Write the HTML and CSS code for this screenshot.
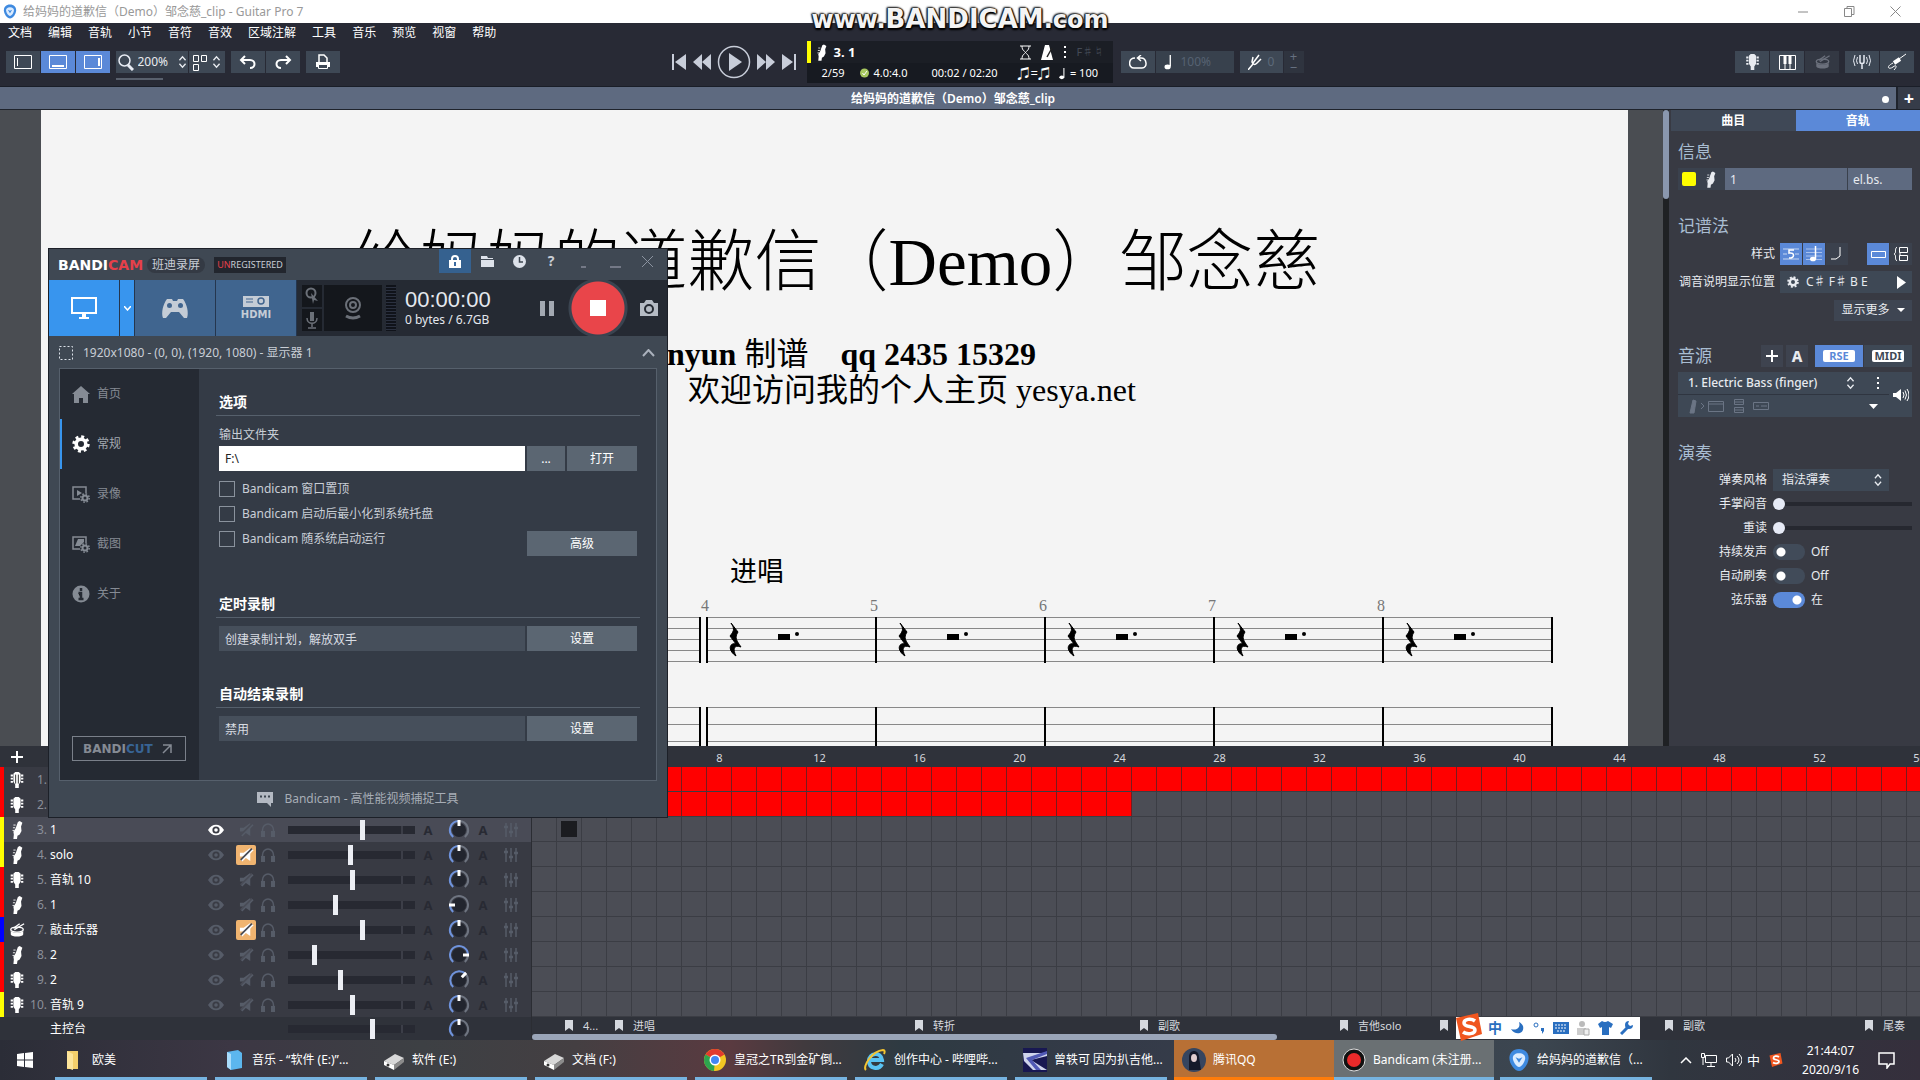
FILE: index.html
```html
<!DOCTYPE html>
<html lang="zh-CN">
<head>
<meta charset="utf-8">
<title>给妈妈的道歉信（Demo）邹念慈_clip - Guitar Pro 7</title>
<link rel="stylesheet" href="styles.css">
</head>
<body>
<svg class="sprite" aria-hidden="true">
  <symbol id="i-gp" viewBox="0 0 16 16"><path d="M8 0C3.500 0 1 3 1 6.500 1 11 5 16 8 16s7-5 7-9.500C15 3 12.500 0 8 0z" fill="#3f8ae0"/><path d="M8 3C5 3 3.500 4.500 3.500 6.500 3.500 9 6 13 8 13s4.500-4 4.500-6.500C12.500 4.500 11 3 8 3z" fill="#dcecff"/><path d="M5.500 6L8 10l2.500-4L8 7z" fill="#3f8ae0"/></symbol>
  <symbol id="i-bass" viewBox="0 0 16 20"><path d="M9 1l2-1 3 2-1.500 4 .5 5-2 4-2.500 1.500L8 20H4l.5-5L4 12l2.500-4z" fill="currentColor"/><path d="M4 4.500h2.500M3.500 7.500H6M3 10.500h2" stroke="currentColor"/></symbol>
  <symbol id="i-head" viewBox="0 0 16 20"><path d="M4 3l2-2h4l2 2v9l-2 3v4H6v-4l-2-3z" fill="currentColor"/><path d="M1 5h14M1 8.500h14M1 12h14" stroke="currentColor" stroke-width="2" stroke-dasharray="2.500 9"/></symbol>
  <symbol id="i-head2" viewBox="0 0 16 20"><path d="M4 3l2-2h4l2 2v9l-2 3v4H6v-4l-2-3z" fill="currentColor"/><path d="M1 5h14M1 8.500h14M1 12h14" stroke="currentColor" stroke-width="2" stroke-dasharray="2.500 9"/><path d="M6.500 4v10M9.500 4v10" stroke="#222"/></symbol>
  <symbol id="i-drum" viewBox="0 0 18 18"><path d="M2 10v4c1 3 13 3 14 0v-4c-2 2.500-12 2.500-14 0z" fill="currentColor"/><ellipse cx="9" cy="8.500" rx="7" ry="2.800" fill="none" stroke="currentColor" stroke-width="1.500"/><path d="M6 8.500L17 2M5 7l7-5" stroke="currentColor" stroke-width="1.500"/></symbol>
  <symbol id="i-eye" viewBox="0 0 16 12"><path d="M0 6c4-7 12-7 16 0-4 7-12 7-16 0z" fill="currentColor"/><circle cx="8" cy="6" r="3.600" fill="#3a3c45"/><circle cx="8" cy="6" r="1.800" fill="currentColor"/></symbol>
  <symbol id="i-mute" viewBox="0 0 16 16"><path d="M1 6h4l7-5v14l-7-5H1z" fill="currentColor"/><path d="M2 14L14 2" stroke="#4a4d57" stroke-width="2.500"/><path d="M3 15L15 3" stroke="currentColor" stroke-width="1.500"/></symbol>
  <symbol id="i-phones" viewBox="0 0 16 16"><path d="M2.500 12V8a5.500 6 0 0 1 11 0v4" fill="none" stroke="currentColor" stroke-width="1.500"/><path d="M1 9h4v6H1zM11 9h4v6h-4z" fill="currentColor"/></symbol>
  <symbol id="i-eq" viewBox="0 0 16 16"><path d="M3 1v14M8 1v14M13 1v14" stroke="currentColor" stroke-width="1.500"/><path d="M1 5h4M6 10h4M11 6h4" stroke="currentColor" stroke-width="2.500"/></symbol>
  <symbol id="i-updown" viewBox="0 0 10 16"><path d="M1.500 6L5 2l3.500 4M1.500 10L5 14l3.500-4" fill="none" stroke="currentColor" stroke-width="1.500"/></symbol>
  <symbol id="i-flag" viewBox="0 0 8 11"><path d="M0 0h8v11L4 8l-4 3z" fill="currentColor"/></symbol>
  <symbol id="i-note" viewBox="0 0 10 18"><ellipse cx="4" cy="14.500" rx="3.500" ry="2.600" fill="currentColor"/><path d="M7 14V1" stroke="currentColor" stroke-width="1.500"/></symbol>
  <symbol id="i-gear" viewBox="0 0 18 18"><circle cx="9" cy="9" r="4.800" fill="none" stroke="currentColor" stroke-width="3.600"/><circle cx="9" cy="9" r="7.200" fill="none" stroke="currentColor" stroke-width="3" stroke-dasharray="2.900 2.750"/></symbol>
  <symbol id="i-drive" viewBox="0 0 22 22"><path d="M1 12L12 5l9 4-10 7z" fill="#d8d8d8"/><path d="M1 12v4l10 5v-5z" fill="#fff"/><path d="M11 16l10-7v4l-10 8z" fill="#8b8b8b"/><circle cx="5" cy="16" r="1.500" fill="#333"/></symbol>
  <symbol id="i-sogou" viewBox="0 0 28 28"><path d="M1 5L23 0l4 21-21 7z" fill="#f0561f"/><path d="M20 8c-4-3-11-2-11 2 0 5 11 2 11 7 0 4-8 5-12 2" fill="none" stroke="#fff" stroke-width="3.500"/></symbol>
  <symbol id="i-video" viewBox="0 0 18 18"><path d="M8 14H1V2h13v6" fill="none" stroke="currentColor" stroke-width="1.500"/><path d="M5 5v6l5-3z" fill="currentColor"/><circle cx="13" cy="13" r="2.500" fill="none" stroke="currentColor" stroke-width="2"/><circle cx="13" cy="13" r="4.200" fill="none" stroke="currentColor" stroke-width="1.500" stroke-dasharray="1.600 1.700"/></symbol>
  <symbol id="i-image" viewBox="0 0 18 18"><path d="M8 14H1V2h13v6" fill="none" stroke="currentColor" stroke-width="1.500"/><path d="M3 11l3-7h6v3L8 11z" fill="currentColor"/><circle cx="13" cy="13" r="2.500" fill="none" stroke="currentColor" stroke-width="2"/><circle cx="13" cy="13" r="4.200" fill="none" stroke="currentColor" stroke-width="1.500" stroke-dasharray="1.600 1.700"/></symbol>
</svg>

<div class="app">
  <header class="titlebar">
    <svg width="14" height="15"><use href="#i-gp"/></svg>
    <span class="titlebar-text">给妈妈的道歉信（Demo）邹念慈_clip - Guitar Pro 7</span>
    <div class="winbtns">
      <button aria-label="最小化"><svg width="11" height="11"><path d="M0 6h10" stroke="#888"/></svg></button>
      <button aria-label="还原"><svg width="11" height="11"><path d="M.5 2.500h7v8h-7zM3 2V.5h7v8H8" fill="none" stroke="#888"/></svg></button>
      <button aria-label="关闭"><svg width="11" height="11"><path d="M.5.5l10 10M10.500.5l-10 10" stroke="#888"/></svg></button>
    </div>
  </header>
  <div class="watermark" aria-hidden="true">www.<b>BANDICAM</b>.com</div>

  <nav class="menu">
    <button>文档</button><button>编辑</button><button>音轨</button><button>小节</button><button>音符</button><button>音效</button><button>区域注解</button><button>工具</button><button>音乐</button><button>预览</button><button>视窗</button><button>帮助</button>
  </nav>

  <div class="toolbar">
    <div class="tb-left">
      <div class="group">
        <button class="tb" aria-label="左侧面板"><svg width="18" height="14"><path d="M.5.5h17v13H.5zM3.500 3v8" fill="none" stroke="#fff"/></svg></button>
        <button class="tb on" aria-label="底部面板"><svg width="18" height="14"><path d="M.5.5h17v13H.5z" fill="none" stroke="#fff"/><path d="M3 11h12" stroke="#fff" stroke-width="2"/></svg></button>
        <button class="tb on" aria-label="右侧面板"><svg width="18" height="14"><path d="M.5.5h17v13H.5z" fill="none" stroke="#fff"/><path d="M15 3v8" stroke="#fff" stroke-width="2"/></svg></button>
      </div>
      <div class="group">
        <label class="tb zoom"><svg width="16" height="17" fill="none" stroke="#e8ecf4"><circle cx="6.500" cy="6.500" r="5.500" stroke-width="1.500"/><path d="M10 11l5 5" stroke-width="3"/></svg><select aria-label="缩放"><option>200%</option></select><svg width="9" height="14"><use href="#i-updown"/></svg></label>
        <button class="tb layout" aria-label="页面布局"><svg width="15" height="17" fill="none" stroke="#fff"><path d="M.5 1.500h5v6h-5zM8.500 1.500h5v6h-5zM.5 10.500h5v6h-5z"/></svg><svg width="9" height="14"><use href="#i-updown"/></svg></button>
      </div>
      <div class="group">
        <button class="tb" aria-label="撤销"><svg width="18" height="14" fill="none" stroke="#fff" stroke-width="2"><path d="M6 1L2 5l4 4M2 5h9c6 0 6 8 0 8"/></svg></button>
        <button class="tb" aria-label="重做"><svg width="18" height="14" fill="none" stroke="#fff" stroke-width="2"><path d="M12 1l4 4-4 4M16 5H7c-6 0-6 8 0 8"/></svg></button>
      </div>
      <button class="tb" aria-label="打印"><svg width="16" height="16"><path d="M4 8V1h5l3 3v4" fill="none" stroke="#fff" stroke-width="1.500"/><path d="M1 8h14v5H1z" fill="#fff"/><path d="M3.500 10.500h9v4h-9z" fill="#3e4855" stroke="#fff"/></svg></button>
    </div>
    <div class="tb-mid">
      <div class="transport">
        <button aria-label="到开头"><svg width="17" height="18" fill="#c8cdd9"><path d="M1 1h2v16H1zM15 1v16L4 9z"/></svg></button>
        <button aria-label="后退"><svg width="19" height="16" fill="#c8cdd9"><path d="M9 0v16L0 8zM18 0v16L9 8z"/></svg></button>
        <button aria-label="播放"><svg width="34" height="34"><circle cx="17" cy="17" r="15.500" fill="none" stroke="#c8cdd9" stroke-width="1.500"/><path d="M12 8v18l13-9z" fill="#c8cdd9"/></svg></button>
        <button aria-label="前进"><svg width="19" height="16" fill="#c8cdd9"><path d="M1 0v16l9-8zM10 0v16l9-8z"/></svg></button>
        <button aria-label="到结尾"><svg width="17" height="18" fill="#c8cdd9"><path d="M14 1h2v16h-2zM2 1v16l11-8z"/></svg></button>
      </div>
      <div class="display">
        <div class="disp-top">
          <svg width="13" height="17"><use href="#i-bass"/></svg><b>3. 1</b>
          <svg class="push" width="11" height="15" fill="none" stroke="#fff"><path d="M0 1h11M0 14h11M2 1c0 5 3 5 3.500 6.500C5 9 2 9 2 14M9 1c0 5-3 5-3.500 6.500C6 9 9 9 9 14"/></svg>
          <svg width="13" height="15"><path d="M4 0h4l4 15H0z" fill="#fff"/><path d="M6 12l5-9" stroke="#222" stroke-width="1.500"/></svg>
          <svg width="3" height="12" fill="#fff"><path d="M0 0h2v2H0zM0 5h2v2H0zM0 10h2v2H0z"/></svg>
          <span class="dim">F♯♮</span>
        </div>
        <div class="disp-bot">
          <span>2/59</span><svg width="9" height="10"><circle cx="4.500" cy="5" r="4.500" fill="#a8c860"/><path d="M2.500 5l1.500 2 3-4" fill="none" stroke="#fff"/></svg><span>4.0:4.0</span><span class="time">00:02 / 02:20</span><span class="swing">♫=♫</span><svg width="7" height="13"><use href="#i-note"/></svg><span>= 100</span>
        </div>
      </div>
      <div class="group">
        <button class="tb" aria-label="循环"><svg width="18" height="14" fill="none" stroke="#fff" stroke-width="1.500"><path d="M6 3C-1 3-1 13 5 13h8c6 0 5-10-1-10H9M12 0L8.500 3 12 6"/></svg></button>
        <button class="tb speed"><svg width="9" height="16"><use href="#i-note"/></svg><span>100%</span></button>
      </div>
      <div class="group">
        <button class="tb tune"><svg width="14" height="16" fill="none" stroke="#fff" stroke-width="1.500"><path d="M0 16l5-6M5 3L4 8c1 3 3 3 5 1l4-4M5 9l6-8"/></svg><span>0</span></button>
        <button class="pm" aria-label="调整半音"><span>+</span><span>−</span></button>
      </div>
    </div>
    <div class="tb-right">
      <div class="group">
        <button class="tb" aria-label="指板"><svg width="15" height="18"><use href="#i-head"/></svg></button>
        <button class="tb" aria-label="键盘"><svg width="17" height="15"><path d="M.5.5h16v14H.5zM6 9v5M11 9v5" fill="none" stroke="#fff"/><path d="M4.500 1h3v8h-3zM9.500 1h3v8h-3z" fill="#fff"/></svg></button>
        <button class="tb off" aria-label="鼓"><svg width="17" height="16"><use href="#i-drum"/></svg></button>
      </div>
      <div class="group">
        <button class="tb" aria-label="调音器"><svg width="18" height="16" fill="none" stroke="#e6eaf2"><path d="M7 1v7c0 2 4 2 4 0V1M9 9v6" stroke-width="1.500"/><path d="M4.500 3q-2 4 0 7M2 1q-3 6 0 11M13.500 3q2 4 0 7M16 1q3 6 0 11"/></svg></button>
        <button class="tb" aria-label="线路输入"><svg width="20" height="18" fill="none" stroke="#fff"><path d="M12 6l7-5"/><path d="M7 10l6-4" stroke-width="4"/><path d="M6 10C-2 14 2 17 6 14s4 0 1 3"/></svg></button>
      </div>
    </div>
  </div>

  <div class="doctabs"><span class="doctab">给妈妈的道歉信（Demo）邹念慈_clip<i class="dirty"></i></span><button class="newtab" aria-label="新建">+</button></div>

  <main class="work">
    <section class="canvas">
      <article class="page">
        <h1>给妈妈的道歉信（Demo）邹念慈</h1>
        <p class="by"><b>nyun </b>制谱　<b>qq 2435 15329</b></p>
        <p class="home">欢迎访问我的个人主页 yesya.net</p>
        <p class="mark">进唱</p>
        <div class="system" id="system"></div>
      </article>
    </section>
    <div class="vscroll"><i></i></div>
    <aside class="side">
      <div class="tabs"><button>曲目</button><button class="on">音轨</button></div>
      <div class="side-body">
        <section>
          <h2>信息</h2>
          <div class="info"><i class="swatch"></i><svg width="13" height="17"><use href="#i-bass"/></svg><input aria-label="音轨名称" value="1"><input class="short" aria-label="简称" value="el.bs."></div>
        </section>
        <section class="rows">
          <h2>记谱法</h2>
          <div class="row"><span class="lab">样式</span>
            <div class="seg"><button class="on" aria-label="六线谱"><svg width="16" height="16" stroke="#c6d6f2" fill="none"><path d="M0 3h16M0 8h4M12 8h4M0 13h16"/><path d="M11 4H6v3c6-1 6 5 0 5" stroke="#fff" stroke-width="1.500"/></svg></button><button class="on" aria-label="五线谱"><svg width="16" height="16"><path d="M0 3h16M0 6.500h16M0 10h16M0 13.500h16" stroke="#a9c1ec"/><ellipse cx="7" cy="13" rx="3" ry="2.300" fill="#fff"/><path d="M9.500 13V0" stroke="#fff" stroke-width="1.500"/></svg></button><button aria-label="节奏"><svg width="14" height="16"><path d="M1 13h5l4-3V1" fill="none" stroke="#fff"/></svg></button></div>
            <div class="seg push"><button class="on" aria-label="横向"><svg width="15" height="7"><path d="M.5.5h14v6H.5z" fill="none" stroke="#fff"/></svg></button><button aria-label="纵向"><svg width="15" height="16" fill="none" stroke="#fff"><path d="M5.500 1.500h8v5h-8zM5.500 9.500h8v5h-8zM6 6v4M3 1C0 3 3 7 0 8c3 1 0 5 3 7"/></svg></button></div>
          </div>
          <div class="row"><span class="lab">调音说明显示位置</span><button class="tuning"><svg width="12" height="12"><use href="#i-gear"/></svg><span>C♯ F♯ B E</span><svg class="push" width="9" height="13"><path d="M0 0v13l9-6.500z" fill="#fff"/></svg></button></div>
          <div class="row"><button class="more push">显示更多<svg width="8" height="5"><path d="M0 0h8L4 4z" fill="#fff"/></svg></button></div>
        </section>
        <section>
          <div class="sound-head"><h2>音源</h2><button class="sq push" aria-label="添加"><svg width="12" height="12"><path d="M6 0v12M0 6h12" stroke="#fff" stroke-width="2"/></svg></button><button class="sq a">A</button><div class="seg2"><button class="on"><b>RSE</b></button><button><b>MIDI</b></button></div></div>
          <div class="sound">
            <label class="s1"><select aria-label="音色"><option>1. Electric Bass (finger)</option></select><svg width="9" height="14"><use href="#i-updown"/></svg><svg width="3" height="12" fill="#fff"><path d="M0 0h2v2H0zM0 5h2v2H0zM0 10h2v2H0z"/></svg></label>
            <button class="s2" aria-label="效果链"><svg width="90" height="16" fill="none" stroke="#6b7585"><path d="M4 15L7 2l3 1-2 12z" fill="#6b7585"/><path d="M15 5l3 3-3 3M22.500 3.500h15v10h-15zM23 6h15M48.500 1.500h9v5h-9zM48.500 9.500h9v5h-9zM49 4h8M49 12h8M67.500 4.500h15v7h-15zM70 8h3M75 8h6"/></svg><svg width="9" height="5"><path d="M0 0h9L4.500 5z" fill="#fff"/></svg></button>
            <button class="s3" aria-label="试听"><svg width="16" height="14"><path d="M0 5h3l5-4v12L3 9H0z" fill="#fff"/><path d="M10 4q2 3 0 6M12 2.500q3 4.500 0 9M14 1q4 6 0 12" fill="none" stroke="#fff"/></svg></button>
          </div>
        </section>
        <section class="rows play">
          <h2>演奏</h2>
          <div class="row"><label class="lab" for="style">弹奏风格</label><span class="picker"><select id="style"><option>指法彈奏</option></select><svg width="10" height="14"><use href="#i-updown"/></svg></span></div>
          <div class="row"><label class="lab" for="pm">手掌闷音</label><input id="pm" type="range" value="0"></div>
          <div class="row"><label class="lab" for="acc">重读</label><input id="acc" type="range" value="0"></div>
          <div class="row"><label class="lab" for="ring">持续发声</label><input id="ring" type="checkbox" class="tog"><span>Off</span></div>
          <div class="row"><label class="lab" for="brush">自动刷奏</label><input id="brush" type="checkbox" class="tog"><span>Off</span></div>
          <div class="row"><label class="lab" for="str">弦乐器</label><input id="str" type="checkbox" class="tog" checked><span>在</span></div>
        </section>
      </div>
    </aside>
  </main>

  <section class="mixer">
    <div class="tracks">
      <div class="tracks-head"><button aria-label="添加音轨"><svg width="12" height="12"><path d="M6 0v12M0 6h12" stroke="#fff" stroke-width="2"/></svg></button></div>
      <div id="tracks"></div>
    </div>
    <div class="timeline">
      <div class="ruler" id="ruler"></div>
      <div id="lanes"></div>
      <div class="markers" id="markers"></div>
      <div class="hscroll"><i></i></div>
    </div>
  </section>

  <footer class="taskbar">
    <button class="start" aria-label="开始"><svg width="16" height="16" fill="#fff"><path d="M0 2l7-1v6.500H0zM8 1l8-1v7.500H8zM0 8.500h7V15l-7-1zM8 8.500h8V16l-8-1z"/></svg></button>
    <button class="task"><svg width="22" height="22"><path d="M4 2h11v18H4z" fill="#f4cf6b"/><path d="M4 2l6 3v16l-6-2z" fill="#fde59b"/></svg><span>欧美</span></button>
    <button class="task"><svg width="22" height="22"><path d="M4 3l11-2 4 3v15l-11 2-4-3z" fill="#5cb6ee"/><path d="M4 3l4 2v16l-4-3z" fill="#a9dcfb"/></svg><span>音乐 - “软件 (E:)”...</span></button>
    <button class="task"><svg width="22" height="22"><use href="#i-drive"/></svg><span>软件 (E:)</span></button>
    <button class="task"><svg width="22" height="22"><use href="#i-drive"/></svg><span>文档 (F:)</span></button>
    <button class="task"><svg width="24" height="24"><circle cx="12" cy="12" r="11" fill="#f3c623"/><path d="M12 12L2.500 6.500A11 11 0 0 1 21.500 6.500z" fill="#e23b2e"/><path d="M12 12L2.500 6.500A11 11 0 0 0 11 23z" fill="#2da44e"/><circle cx="12" cy="12" r="5.500" fill="#fff"/><circle cx="12" cy="12" r="4" fill="#4286f4"/></svg><span>皇冠之TR到金矿倒...</span></button>
    <button class="task"><svg width="24" height="24" fill="none"><path d="M19 16c-3 6-13 5-13-3S18 3 19 12H8" stroke="#59c3f3" stroke-width="4"/><path d="M3 22C-1 19 9 3 20 2c2 0 2 2 1 4" stroke="#f4c531" stroke-width="2"/></svg><span>创作中心 - 哔哩哔...</span></button>
    <button class="task"><svg width="24" height="24"><path d="M0 0h24v24H0z" fill="#181852"/><path d="M0 5h24v3L8 12l16 10H10L1 13z" fill="#cfd4ec"/><path d="M3 10L24 3v3L9 12l9 10h-5z" fill="#5159b5"/></svg><span>曾轶可 因为扒吉他...</span></button>
    <button class="task qq"><svg width="24" height="24"><circle cx="12" cy="12" r="12" fill="#36455f"/><path d="M7 22V9c0-8 10-8 10 0l2 13z" fill="#15192a"/><ellipse cx="12" cy="10" rx="3" ry="4" fill="#e1cdd0"/><path d="M9 7c2-2 5-2 6 1v-4H9z" fill="#15192a"/></svg><span>腾讯QQ</span></button>
    <button class="task cur"><svg width="24" height="24"><circle cx="12" cy="12" r="11" fill="#111" stroke="#ddd"/><circle cx="12" cy="12" r="7" fill="#ea2a2a"/></svg><span>Bandicam (未注册...</span></button>
    <button class="task"><svg width="22" height="22"><use href="#i-gp"/></svg><span>给妈妈的道歉信（...</span></button>
    <div class="tray">
      <svg width="12" height="7"><path d="M1 6l5-5 5 5" fill="none" stroke="#fff" stroke-width="1.500"/></svg>
      <svg width="16" height="14" fill="none" stroke="#fff"><path d="M4.500 2.500h11v7h-11zM10 10v3M6 13.500h8M.5.5h3v4h-3zM2 5v7"/></svg>
      <svg width="16" height="14" fill="none" stroke="#fff"><path d="M.5 5h2l4-4v12l-4-4h-2zM9 5q2 2 0 4M11 3q4 4 0 8M13 1q6 6 0 12"/></svg>
      <span>中</span>
      <svg width="14" height="16"><use href="#i-sogou"/></svg>
      <time>21:44:07<br>2020/9/16</time>
      <svg width="18" height="17"><path d="M1 1h15v11h-4l-3 4v-4H1z" fill="none" stroke="#fff" stroke-width="1.500"/></svg>
    </div>
  </footer>
</div>

<div class="ime"><svg class="ime-logo" width="28" height="28"><use href="#i-sogou"/></svg><b>中</b>
  <svg width="14" height="14"><path d="M9 1c2 6-3 9-8 7 4 7 14 5 12-3-1-2-2-3-4-4z" fill="#2a6fc0"/></svg>
  <svg width="12" height="12"><circle cx="3" cy="3" r="2" fill="none" stroke="#2a6fc0"/><path d="M8 6h3v3l-2 3 0-3H8z" fill="#2a6fc0"/></svg>
  <svg width="16" height="12"><path d="M0 0h16v12H0z" fill="#2a6fc0"/><path d="M2 3h12M2 6h12M4 9h8" stroke="#fff" stroke-dasharray="2 1"/></svg>
  <svg width="14" height="15"><circle cx="6" cy="3" r="3" fill="#bbb"/><path d="M1 7h9v7H1z" fill="#ccc"/><path d="M8 8h5v6H8z" fill="#eee" stroke="#aaa"/></svg>
  <svg width="15" height="14"><path d="M0 3l4-3q3 2 6 0l5 3-2 4-2-1v8H4V6L2 7z" fill="#2a6fc0"/></svg>
  <svg width="14" height="14"><path d="M1 13l7-7" stroke="#2a6fc0" stroke-width="3"/><path d="M13 4a4 4 0 1 1-4-4l-1 3 2 2z" fill="#2a6fc0"/></svg>
</div>

<div class="bandi" role="dialog" aria-label="Bandicam">
  <div class="b-title">
    <strong>BANDI<em>CAM</em></strong><span class="pill">班迪录屏</span><span class="unreg"><em>UN</em>REGISTERED</span>
    <div class="b-icons">
      <button class="lock" aria-label="锁定"><svg width="12" height="13"><path d="M0 5h12v8H0z" fill="#fff"/><path d="M3 6V4c0-4 6-4 6 0v2" fill="none" stroke="#fff" stroke-width="2"/><path d="M6 7v4" stroke="#3a6aa0" stroke-width="2"/></svg></button>
      <button aria-label="文件夹"><svg width="13" height="11"><path d="M0 0h6l1 2h5v1H0zM0 4h13v7H0z" fill="#dde2ea"/></svg></button>
      <button aria-label="定时"><svg width="13" height="13"><circle cx="6.500" cy="6.500" r="6.500" fill="#dde2ea"/><path d="M6.500 2v5H10" fill="none" stroke="#3d4650" stroke-width="1.500"/></svg></button>
      <button aria-label="帮助" class="q">?</button>
      <button aria-label="托盘"><svg width="13" height="13"><path d="M4 12h5" stroke="#aab"/></svg></button>
      <button aria-label="最小化"><svg width="13" height="13"><path d="M1 12h11" stroke="#aab"/></svg></button>
      <button aria-label="关闭"><svg width="11" height="11"><path d="M0 0l11 11M11 0L0 11" stroke="#8b93a0"/></svg></button>
    </div>
  </div>
  <div class="b-bar">
    <button class="mode scr" aria-label="屏幕"><svg width="26" height="22"><path d="M1 1h24v15H1z" fill="none" stroke="#fff" stroke-width="2"/><path d="M11 17h4v3h3v2H8v-2h3z" fill="#fff"/></svg></button>
    <button class="mode arrow" aria-label="选择区域"><svg width="7" height="5"><path d="M0 0l3.500 4L7 0" fill="none" stroke="#fff" stroke-width="1.500"/></svg></button>
    <button class="mode" aria-label="游戏"><svg width="28" height="21"><path d="M6 1h5l1 2h4l1-2h5c4 5 6 14 4 19h-3l-5-6h-8l-5 6H2C0 15 2 6 6 1z" fill="#c4ccd6"/><circle cx="8.500" cy="7.500" r="2.500" fill="#41658f"/><circle cx="19.500" cy="7.500" r="2.500" fill="#41658f"/></svg></button>
    <button class="mode hdmi"><svg width="28" height="12"><path d="M1 0h26v11H1z" fill="#c4ccd6"/><circle cx="19" cy="5" r="3" fill="none" stroke="#41658f" stroke-width="1.500"/><path d="M4 3h7M4 6h7" stroke="#41658f"/></svg><span>HDMI</span></button>
    <div class="minis"><button aria-label="鼠标"><svg width="14" height="18" fill="#6b7078"><circle cx="6" cy="6" r="4.500" fill="none" stroke="#6b7078" stroke-width="2"/><path d="M6 6l7 8-4-1-1 4z"/></svg></button><button aria-label="麦克风"><svg width="14" height="18"><path d="M5 1h4v9H5z" fill="#6b7078"/><path d="M2 7c0 7 10 7 10 0M7 12v4M3 17h8" fill="none" stroke="#6b7078" stroke-width="1.500"/></svg></button></div>
    <button class="cam" aria-label="摄像头"><svg width="18" height="24" fill="none" stroke="#6b7078"><circle cx="9" cy="9" r="7" stroke-width="2"/><circle cx="9" cy="9" r="3" stroke-width="2"/><path d="M2 20q7 4 14 0" stroke-width="3"/></svg></button>
    <i class="meter"></i>
    <div class="clock"><span class="big">00:00:00</span><span>0 bytes / 6.7GB</span></div>
    <button class="pause" aria-label="暂停"><svg width="14" height="15" fill="#a3a9b2"><path d="M0 0h5v15H0zM9 0h5v15H9z"/></svg></button>
    <button class="stop" aria-label="停止"><i></i></button>
    <button class="snap" aria-label="截图"><svg width="18" height="16"><path d="M0 3h4l2-3h6l2 3h4v13H0z" fill="#b5bbc4"/><circle cx="9" cy="9" r="4" fill="none" stroke="#252a33" stroke-width="2"/></svg></button>
  </div>
  <div class="b-info"><svg width="14" height="14"><path d="M.5.5h13v13H.5z" fill="none" stroke="#dde2ea" stroke-dasharray="2 2"/></svg><span>1920x1080 - (0, 0), (1920, 1080) - 显示器 1</span><svg class="push" width="13" height="8"><path d="M1 7l5.500-6L12 7" fill="none" stroke="#aab1bc" stroke-width="2"/></svg></div>
  <div class="b-panel">
    <nav class="b-nav">
      <button><svg width="18" height="17"><path d="M9 0l9 8h-2v9h-5v-5H7v5H2V8H0z" fill="currentColor"/></svg>首页</button>
      <button class="on"><svg width="18" height="18"><use href="#i-gear"/></svg>常规</button>
      <button><svg width="18" height="18"><use href="#i-video"/></svg>录像</button>
      <button><svg width="18" height="18"><use href="#i-image"/></svg>截图</button>
      <button><svg width="18" height="18"><circle cx="9" cy="9" r="8.500" fill="currentColor"/><path d="M9 3v3M6.500 8H9v6M6.500 14h5" stroke="#252a33" stroke-width="2.500"/></svg>关于</button>
      <button class="cut"><strong>BANDI<em>CUT</em></strong><svg width="10" height="10"><path d="M1 1h8v8M9 1L1 9" fill="none" stroke="currentColor" stroke-width="1.500"/></svg></button>
    </nav>
    <div class="b-form">
      <h3>选项</h3>
      <label class="out" for="out">输出文件夹</label>
      <div class="line"><input id="out" value="F:\"><button class="dots">...</button><button class="open">打开</button></div>
      <div class="opts">
        <div>
          <label><input type="checkbox">Bandicam 窗口置顶</label>
          <label><input type="checkbox">Bandicam 启动后最小化到系统托盘</label>
          <label><input type="checkbox">Bandicam 随系统启动运行</label>
        </div>
        <button class="wide-btn">高级</button>
      </div>
      <h3>定时录制</h3>
      <div class="line"><input class="ro" aria-label="定时录制" value="创建录制计划，解放双手" readonly><button class="wide-btn">设置</button></div>
      <h3>自动结束录制</h3>
      <div class="line"><input class="ro" aria-label="自动结束录制" value="禁用" readonly><button class="wide-btn">设置</button></div>
    </div>
  </div>
  <div class="b-foot"><svg width="16" height="15"><path d="M0 0h16v11h-2v4l-4-4H0z" fill="#b3b9c2"/><path d="M3 4.500h10" stroke="#3d4650" stroke-width="2" stroke-dasharray="2 2"/></svg>Bandicam - 高性能视频捕捉工具</div>
</div>
<script src="app.js"></script>
</body>
</html>
```
FILE: app.js
```js
const tracks = [
  { n: 1, name: '', icon: 'head2', color: 'red', vol: 50, pan: 0, bars: 60 },
  { n: 2, name: '', icon: 'head', color: 'red', vol: 50, pan: 0, bars: 24 },
  { n: 3, name: '1', icon: 'bass', color: 'yellow', vol: 59, pan: 0, selected: true },
  { n: 4, name: 'solo', icon: 'bass', color: 'yellow', vol: 49, pan: 0, mute: true },
  { n: 5, name: '音轨 10', icon: 'head', color: 'red', vol: 51, pan: 0 },
  { n: 6, name: '1', icon: 'bass', color: 'red', vol: 37, pan: -90 },
  { n: 7, name: '敲击乐器', icon: 'drum', color: 'blue', vol: 59, pan: 0, mute: true },
  { n: 8, name: '2', icon: 'bass', color: 'red', vol: 20, pan: 90 },
  { n: 9, name: '2', icon: 'head', color: 'red', vol: 41, pan: 45 },
  { n: 10, name: '音轨 9', icon: 'head', color: 'yellow', vol: 51, pan: 0 }
];
const icon = (id, w, h) => `<svg width="${w}" height="${h}"><use href="#i-${id}"/></svg>`;
const pt = (deg, r) => {
  const a = (deg - 90) * Math.PI / 180;
  return (11 + r * Math.cos(a)).toFixed(1) + ' ' + (11 + r * Math.sin(a)).toFixed(1);
};
// Pan knob: the arc left of the pointer is lit, the rest is grey.
const knob = pan => `<svg class="knob" width="22" height="22" fill="none">
  <circle cx="11" cy="11" r="7" fill="#22252e"/>
  <path d="M${pt(-140, 9)}A9 9 0 ${pan + 140 > 180 ? 1 : 0} 1 ${pt(pan, 9)}" stroke="#6f93dc" stroke-width="2"/>
  <path d="M${pt(pan, 9)}A9 9 0 ${140 - pan > 180 ? 1 : 0} 1 ${pt(140, 9)}" stroke="#6e7480" stroke-width="2"/>
  <path d="M${pt(pan, 10)}L${pt(pan, 4)}" stroke="#fff" stroke-width="3"/></svg>`;

document.getElementById('tracks').innerHTML = tracks.map(t => `
  <div class="track ${t.color}${t.selected ? ' selected' : ''}">
    <span class="ti">${icon(t.icon, 16, 18)}</span><span class="tn">${t.n}.</span><span class="tname">${t.name}</span>
    <button class="eye" aria-label="显示">${icon('eye', 16, 12)}</button>
    <button class="mute${t.mute ? ' on' : ''}" aria-label="静音">${icon('mute', 15, 15)}</button>
    <button class="solo" aria-label="独奏">${icon('phones', 16, 16)}</button>
    <input type="range" aria-label="音量" value="${t.vol}">
    <b class="auto">A</b>${knob(t.pan)}<b class="auto">A</b>
    <button class="eq" aria-label="均衡器">${icon('eq', 16, 16)}</button>
  </div>`).join('') + `
  <div class="track master"><span></span><span></span><span class="tname">主控台</span><span></span><span></span><span></span>
    <input type="range" aria-label="总音量" value="67"><span></span>${knob(0)}</div>`;

let ruler = '';
for (let bar = 4; bar <= 56; bar += 4) ruler += `<span style="grid-column:${bar}">${bar}</span>`;
document.getElementById('ruler').innerHTML = ruler;

document.getElementById('lanes').innerHTML = tracks.map(t =>
  `<div class="lane">${t.bars ? `<i class="clip" style="width:${t.bars * 25}px"></i>` : ''}${t.selected ? '<i class="cursor"></i>' : ''}</div>`).join('');

document.getElementById('markers').innerHTML = [
  [2, '4...'], [4, '进唱'], [16, '转折'], [25, '副歌'], [33, '吉他solo'], [37, ''], [46, '副歌'], [54, '尾奏']
].map(([bar, text]) => `<span style="grid-column:${bar}">${icon('flag', 8, 11)}${text}</span>`).join('');

// One measure: five-line staff with a quarter rest and a dotted half rest, and the tab staff under it.
const measure = n => `<div class="measure"><span class="num">${n}</span>
  <svg class="staff" width="169" height="46"><path d="M0 0v46${n === 8 ? 'M169 0v46' : ''}" stroke="#000" stroke-width="2"/>
  <path d="M24 6l7 9c-4 6-1 9 3 15-8-3-8 3-5 9-10-7-5-14 0-12l-6-8c5-6 4-8 1-13z" stroke="#000"/>
  <path d="M71 17h12v6H71z"/><circle cx="90" cy="17" r="2"/></svg>
  <svg class="tab" width="169" height="76"><path d="M0 0v76${n === 8 ? 'M169 0v76' : ''}" stroke="#000" stroke-width="2"/></svg></div>`;
document.getElementById('system').innerHTML = '<div class="measure lead"><span class="num"></span><div class="staff"></div><div class="tab"></div></div>' +
  [4, 5, 6, 7, 8].map(measure).join('');
```
FILE: styles.css
```css
* { box-sizing: border-box; }
body { margin: 0; overflow: hidden; background: #383a43; color: #e8ebf0; font: 12px/16px "Noto Sans", "Noto Sans CJK SC", sans-serif; }
button, input, select { font: inherit; color: inherit; border: 0; padding: 0; margin: 0; background: none; border-radius: 0; outline: 0; }
button { display: flex; align-items: center; justify-content: center; white-space: nowrap; }
select { appearance: none; }
svg { display: block; flex: none; }
h1, h2, h3, p { margin: 0; font-weight: 400; }
em { font-style: normal; }
.sprite { position: absolute; width: 0; height: 0; }
.push { margin-left: auto; }
.app { height: 100vh; display: flex; flex-direction: column; }

/* window title and menu */
.titlebar { height: 23px; flex: none; background: #fff; color: #999; display: flex; align-items: center; gap: 6px; padding-left: 3px; }
.winbtns { margin-left: auto; display: flex; height: 20px; padding-right: 2px; }
.winbtns button { width: 46px; }
.watermark { position: absolute; left: 0; right: 0; top: 5px; text-align: center; font: bold 24px/28px "DejaVu Sans", sans-serif; color: #f4f4f4; text-shadow: 0 0 2px #000, 1px 1px 2px #000, -1px -1px 2px #333, 0 2px 2px #000, 1px 0 1px #222, -1px 0 1px #222; pointer-events: none; }
.watermark b { font-size: 26px; }
.menu { height: 18px; flex: none; background: #282a35; display: flex; gap: 16px; padding: 2px 8px 0; color: #fff; }

/* toolbar */
.toolbar { height: 46px; flex: none; background: #282a35; border-bottom: 1px solid #1a1e28; display: grid; grid-template-columns: 1fr auto 1fr; align-items: start; padding: 0 6px; }
.tb-left, .tb-right, .tb-mid { display: flex; align-items: center; gap: 6px; height: 42px; }
.tb-right { justify-content: flex-end; }
.tb-mid { padding-left: 54px; }
.group { display: flex; gap: 1px; }
.tb { width: 34px; height: 22px; background: #3e4855; display: flex; align-items: center; justify-content: center; gap: 4px; }
.tb.on { background: #5b89d8; }
.tb.off { background: #333843; color: #6b707c; }
.tb.zoom { width: 72px; position: relative; }
.tb.zoom::after { content: ""; position: absolute; left: 0; top: 27px; width: 47px; height: 2px; background: #59606d; }
.zoom select { width: 36px; }
.tb.layout { width: 36px; }
.transport { display: flex; align-items: center; gap: 5px; margin-right: 4px; }
.display { width: 306px; height: 42px; background: #1b1e25; color: #fff; margin-right: 2px; }
.disp-top { height: 22px; border-left: 4px solid #ff0; display: flex; align-items: center; gap: 10px; padding: 0 10px 0 4px; }
.disp-top b { font-size: 13px; margin-left: -4px; }
.dim { color: #444a56; width: 26px; white-space: nowrap; font-size: 11px; }
.disp-bot { height: 20px; background: #171a21; display: flex; align-items: center; gap: 4px; padding-left: 15px; font-size: 11px; }
.disp-bot span:first-child { margin-right: 12px; }
.time { margin-left: 20px; }
.swing { margin: 0 4px 0 16px; font-size: 13px; }
.tb.speed { width: 78px; justify-content: flex-start; padding-left: 8px; gap: 8px; background: #38414d; color: #566272; }
.speed svg { color: #fff; }
.tb.tune { width: 43px; gap: 6px; color: #5d6a7a; }
.pm { width: 20px; height: 22px; flex-direction: column; background: #2f343f; color: #667080; line-height: 11px; font-size: 13px; }

/* document tab */
.doctabs { height: 23px; flex: none; display: flex; border-bottom: 1px solid #1f232c; background: #1f232c; gap: 2px; }
.doctab { flex: 1; background: #5e6a80; text-align: center; font-weight: 600; line-height: 22px; padding: 1px 0 0 24px; color: #fff; display: grid; grid-template-columns: 1fr 14px; align-items: center; }
.dirty { width: 7px; height: 7px; border-radius: 50%; background: #fff; }
.newtab { width: 22px; background: #363c49; font-size: 18px; font-weight: 700; color: #fff; }

/* score */
.work { flex: 1; min-height: 0; display: flex; }
.canvas { flex: 1; min-width: 0; background: #4a4d52; padding: 0 35px 0 41px; overflow: hidden; }
.page { background: #f4f4f4; height: 100%; color: #000; font-family: "Liberation Serif", "Noto Sans CJK SC", serif; font-weight: 300; overflow: hidden; }
.page h1 { font-size: 67px; line-height: 80px; padding: 112px 0 0 4px; text-align: center; font-weight: 300; white-space: nowrap; }
.by, .home { font-size: 32px; line-height: 36px; white-space: nowrap; }
.by { margin-top: 34px; padding-left: 626px; font-weight: 400; }
.home { padding-left: 647px; }
.mark { margin-top: 146px; padding-left: 689px; font-size: 27px; line-height: 36px; font-weight: 400; }
.system { display: flex; padding: 6px 76px 0 32px; }
.measure { width: 169px; flex: none; }
.lead { flex: 1; }
.num { display: block; height: 21px; line-height: 20px; font-size: 16px; color: #777; margin-left: -6px; font-weight: 400; }
.staff, .tab { overflow: visible; background-image: linear-gradient(#888 1px, transparent 1px); }
.staff { height: 46px; background-size: 100% 11px; }
.tab { height: 76px; margin-top: 44px; background-size: 100% 17px; }
.lead .staff, .lead .tab { border-right: 2px solid #000; margin-right: 6px; }

.vscroll { width: 6px; background: #1f2124; }
.vscroll i { display: block; height: 89px; border-radius: 3px; background: #8a97ae; }

/* side panel */
.side { width: 251px; background: #383a43; overflow: hidden; }
.tabs { display: flex; height: 21px; padding-left: 2px; }
.tabs button { flex: 1; background: #3f4856; font-weight: 700; color: #fff; }
.tabs .on { background: #5b89d8; }
.side-body { display: flex; flex-direction: column; gap: 24px; padding: 9px 8px 0 9px; }
h2 { font-size: 17px; line-height: 24px; color: #a9bdd2; }
.info { display: flex; align-items: center; height: 22px; margin-top: 4px; background: #3a414d; gap: 8px; padding-left: 4px; }
.swatch { width: 14px; height: 14px; border-radius: 2px; background: #ff0; }
.info input { flex: 1; width: 0; height: 22px; background: #5e6a80; padding-left: 5px; }
.info .short { flex: none; width: 64px; margin-left: -7px; }
.rows { display: flex; flex-direction: column; gap: 6px; }
.rows h2 { margin-bottom: -1px; }
.row { display: flex; align-items: center; height: 22px; }
.lab { width: 97px; text-align: right; margin-right: 5px; white-space: nowrap; }
.seg { display: flex; gap: 1px; }
.seg button { width: 22px; height: 22px; background: #3b414d; }
.seg .on { background: #5b89d8; }
.tuning { flex: 1; height: 22px; background: #3e4855; justify-content: flex-start; gap: 7px; padding: 0 6px 0 7px; }
.more { width: 78px; height: 21px; background: #3e4552; gap: 7px; }
.sound-head { display: flex; align-items: center; gap: 3px; height: 22px; margin-bottom: 5px; }
.sq { width: 22px; height: 22px; background: #3e434f; }
.sq.a { font-size: 15px; font-weight: 800; }
.seg2 { display: flex; gap: 1px; margin-left: 4px; }
.seg2 button { width: 48px; height: 22px; background: #3e4855; color: #3e4855; }
.seg2 b { background: #fff; border-radius: 2px; width: 32px; line-height: 12px; font-size: 11px; }
.seg2 .on { background: #5b89d8; color: #5b89d8; }
.sound { display: grid; grid-template-columns: 1fr 23px; grid-template-rows: 23px 22px; background: #3e4855; }
.s1 { display: flex; align-items: center; gap: 22px; padding: 0 9px 0 10px; border-bottom: 1px solid #2f3540; }
.s1 select { flex: 1; width: 0; font-weight: 500; }
.s1 svg:nth-of-type(1) { margin-left: -14px; }
.s2 { justify-content: space-between; padding: 0 11px 0 8px; }
.s3 { grid-column: 2; grid-row: 1 / 3; }
.play { gap: 2px; }
.play h2 { margin-bottom: 2px; }
.play .lab { width: 89px; margin-right: 5px; }
.play .lab + * { margin-left: 1px; }
.picker { width: 116px; height: 22px; background: #3e4855; display: flex; align-items: center; padding: 0 6px 0 9px; }
.picker select { flex: 1; }
input[type=range] { appearance: none; background: none; }
.play input[type=range] { flex: 1; width: 0; height: 22px; }
.play input[type=range]::-webkit-slider-runnable-track { height: 4px; background: #262830; }
.play input[type=range]::-webkit-slider-thumb { appearance: none; width: 12px; height: 12px; margin-top: -4px; border-radius: 50%; background: #e6eaf6; }
.tog { appearance: none; width: 32px; height: 16px; border-radius: 8px; margin-right: 6px; background: radial-gradient(circle at 8px 8px, #fff 4px, #414b59 5px); }
.tog:checked { background: radial-gradient(circle at 24px 8px, #fff 4px, #5b89d8 5px); }

/* mixer */
.mixer { flex: none; display: flex; }
.tracks { width: 531px; flex: none; background: #383a43; }
.tracks-head { height: 21px; background: #2f323a; padding: 5px 11px; }
.track { display: grid; grid-template-columns: 26px 17px 151px 36px 22px 32px 127px 26px 36px 12px 1fr; align-items: center; height: 25px; border-left: 4px solid; color: #fff; }
.red { border-color: #f00; }
.yellow { border-color: #ff0; }
.blue { border-color: #00f; }
.track.selected { background: #494b56; }
.ti { padding-left: 5px; }
.tn { text-align: right; color: #8b8f99; }
.tname { padding-left: 3px; }
.track button { color: #565c68; height: 20px; justify-self: start; }
.track.selected .eye { color: #fff; }
.eye { margin-left: 10px; }
.track .mute { width: 20px; justify-self: end; }
.track .mute.on { background: #f0b470; color: #fff; border-radius: 2px; }
.solo { margin-left: 4px; }
.track input { width: 127px; height: 22px; }
.track input::-webkit-slider-runnable-track { height: 8px; background: linear-gradient(90deg, #272932 113px, #3c3e48 113px 115px, #272932 115px); }
.track input::-webkit-slider-thumb { appearance: none; width: 5px; height: 20px; margin-top: -6px; background: #eceef4; }
.auto { text-align: center; font-size: 13px; color: #282a33; }
.knob { justify-self: center; }
.eq { margin-left: 14px; }
.master { height: 23px; background: #2f323a; border-color: #2f323a; }
.timeline { flex: 1; min-width: 0; overflow: hidden; background: #2f323a; border-left: 1px solid #2b2d33; }
.ruler, .markers { display: grid; grid-template-columns: repeat(60, 25px); }
.ruler { height: 21px; line-height: 24px; justify-items: center; font-size: 11px; color: #d5d8de; }
.lane { height: 25px; display: flex; align-items: center; background: repeating-linear-gradient(90deg, transparent 0 24px, #3b3d44 24px 25px), #4b4d55; border-bottom: 1px solid #3b3d44; overflow: hidden; }
.clip { height: 25px; flex: none; background: repeating-linear-gradient(90deg, #f00 0 24px, #7a1a1e 24px 25px); }
.cursor { width: 16px; height: 16px; margin-left: 29px; background: #1b1c20; }
.markers { height: 17px; align-items: center; font-size: 11px; color: #d5d8de; }
.markers span { display: flex; align-items: center; gap: 10px; white-space: nowrap; padding-left: 8px; width: 25px; }
.hscroll i { display: block; width: 745px; height: 6px; border-radius: 3px; background: #9aa5b8; }

/* taskbar */
.taskbar { height: 40px; flex: none; display: flex; color: #fff; background: linear-gradient(90deg, #2b2d37, #3c3744 12%, #3d4044 22%, #443f42 30%, #5a3a40 38%, #403a3e 42%, #2e3a42 47%, #343a48 58%, #3c4650 80%, #30363f 87%, #352f3c); }
.start { width: 55px; padding-right: 6px; }
.task { flex: 0 1 152px; min-width: 0; justify-content: flex-start; gap: 7px; padding: 3px 0 0 8px; border-bottom: 3px solid #76b3e0; margin-right: 8px; }
.task.qq, .task.cur { flex-basis: 160px; margin-right: 0; }
.task.qq { background: #b87035; border-color: #ff7c0a; margin-left: -1px; }
.task.cur { background: #6a7073; margin-right: 6px; }
.tray { margin-left: auto; display: flex; align-items: center; gap: 9px; padding-right: 24px; }
.tray span { font-size: 13px; margin-left: -4px; }
.tray time { text-align: center; line-height: 19px; margin: 0 10px; }
.ime { position: absolute; right: 280px; bottom: 41px; width: 184px; height: 22px; background: #fff; display: grid; grid-template-columns: repeat(7, 22px); place-items: center; color: #2a6fc0; padding-left: 28px; }
.ime-logo { position: absolute; left: -1px; top: -4px; }
.ime b { font-size: 14px; }

/* Bandicam window */
.bandi { position: absolute; left: 48px; top: 248px; width: 620px; background: #3f4853; border: 1px solid #1c2028; color: #c9ced6; }
.b-title { height: 31px; display: flex; align-items: center; padding-left: 9px; }
.b-title strong { font: bold 14px/18px "DejaVu Sans", sans-serif; color: #fff; }
.b-title em { color: #e5404a; }
.pill { background: #343a44; border-radius: 9px; padding: 0 5px; margin-left: 4px; }
.unreg { background: #22262e; margin-left: 9px; padding: 0 3px; font-size: 9px; line-height: 16px; }
.b-icons { display: flex; margin-left: auto; align-self: flex-start; padding-right: 4px; }
.b-icons button { width: 32px; height: 24px; }
.lock { background: #35618f; }
.q { font-size: 14px; font-weight: 700; }
.b-bar { height: 56px; background: #252a33; display: flex; align-items: center; }
.mode { width: 81px; height: 56px; background: #40658f; border-right: 1px solid #25364e; flex-direction: column; }
.scr { width: 71px; background: #3895ee; }
.arrow { width: 15px; background: #3895ee; }
.hdmi { gap: 2px; color: #c4ccd6; font: bold 10px/10px "DejaVu Sans", sans-serif; }
.minis { display: flex; flex-direction: column; gap: 2px; margin: 0 2px 0 5px; }
.minis button, .cam { background: #14171c; }
.minis button { width: 20px; height: 22px; }
.cam { width: 58px; height: 46px; }
.meter { width: 10px; height: 46px; margin-left: 4px; background: repeating-linear-gradient(#10131a 0 2px, #2b3140 2px 3px); }
.clock { margin-left: 9px; width: 135px; color: #e4e8ee; white-space: nowrap; }
.big { display: block; font-size: 22px; line-height: 24px; font-family: "Liberation Sans", sans-serif; }
.stop { width: 60px; height: 56px; margin-left: 14px; background: radial-gradient(circle, #e9454a 26px, #3a4450 27px 29px, #252a33 30px); }
.stop i { width: 16px; height: 16px; background: #fff; }
.snap { margin-left: 12px; }
.b-info { height: 32px; display: flex; align-items: center; gap: 10px; padding: 2px 12px 0 10px; }
.b-panel { margin: 0 10px; height: 413px; display: flex; background: #343b46; border: 1px solid #56606c; }
.b-nav { width: 139px; background: #252a33; display: flex; flex-direction: column; color: #858b94; }
.b-nav button { height: 50px; justify-content: flex-start; gap: 7px; padding-left: 10px; border-left: 2px solid transparent; }
.b-nav .on { border-color: #3895ee; color: #a2a8b0; }
.on svg { color: #fff; }
.b-nav .cut { margin: auto 12px 19px; height: 25px; width: 114px; border: 1px solid #7a808a; gap: 9px; padding-left: 10px; }
.cut strong { font: bold 12px/14px "DejaVu Sans", sans-serif; }
.cut em { color: #386495; }
.b-form { flex: 1; padding: 21px 16px 0 17px; }
h3 { height: 26px; padding-left: 3px; border-bottom: 1px solid #56606c; font-weight: 700; line-height: 24px; color: #fff; }
.out { display: block; margin-top: 9px; line-height: 20px; padding-left: 3px; }
.line { display: flex; gap: 2px; padding: 1px 3px 0; }
h3 + .line { margin-top: 7px; }
.line input { flex: 1; width: 0; height: 25px; background: #fff; color: #222; padding-left: 6px; }
.line .ro { background: #464f5b; color: #d8dce2; }
.line button, .wide-btn { height: 25px; background: #5b6672; color: #fff; }
.dots { width: 38px; }
.open { width: 70px; }
.wide-btn { width: 110px; }
.opts { display: flex; justify-content: space-between; align-items: flex-end; padding: 0 3px; height: 85px; margin-bottom: 36px; }
.opts > div { align-self: flex-start; padding-top: 5px; }
.opts label { display: flex; align-items: center; height: 25px; gap: 7px; white-space: nowrap; }
.opts input { appearance: none; width: 16px; height: 16px; border: 1px solid #8a929d; }
.line + h3 { margin-top: 31px; }
.b-foot { height: 36px; display: flex; align-items: center; justify-content: center; gap: 11px; color: #a7adb6; }
```
